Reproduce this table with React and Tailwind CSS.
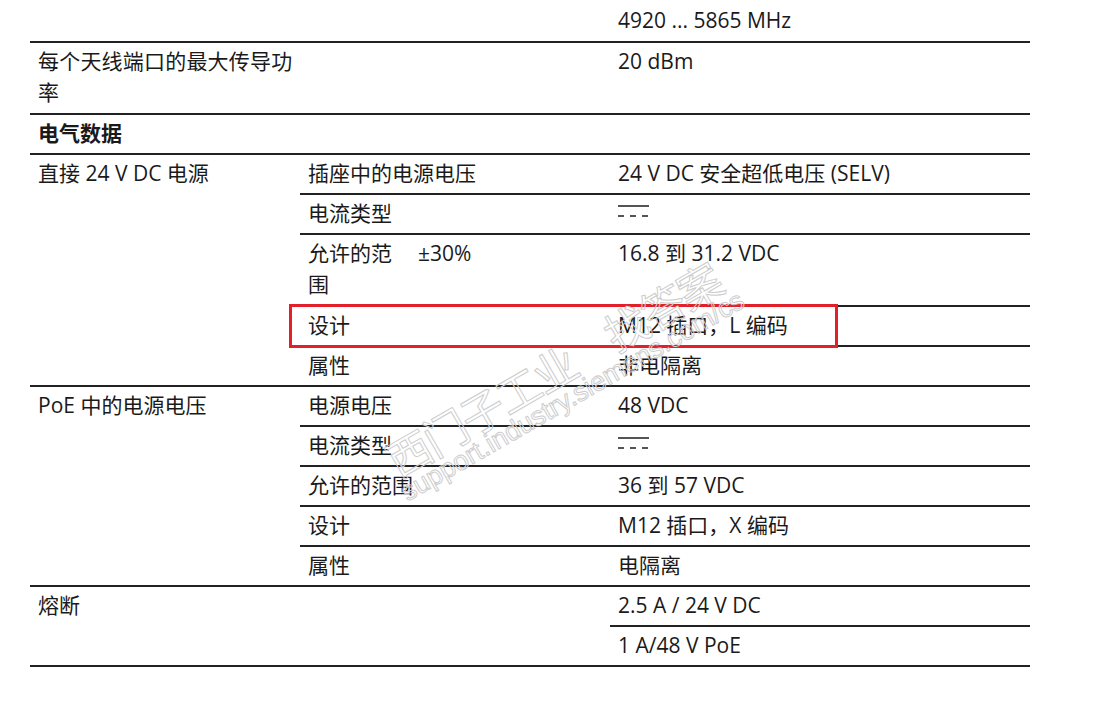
import React from 'react';

const line = 'border-[#222]';

function DcSymbol() {
  return (
    <div className="pt-[7px]">
      <div className="w-[31px] h-[2px] bg-[#555]" />
      <div className="flex gap-[6px] mt-[8px]">
        <div className="w-[6px] h-[2px] bg-[#555]" />
        <div className="w-[6px] h-[2px] bg-[#555]" />
        <div className="w-[6px] h-[2px] bg-[#555]" />
      </div>
    </div>
  );
}

function SubRow({ label, value, last, tall }) {
  const h = last ? (tall ? 'h-[70px]' : 'h-[38px]') : tall ? 'h-[72px]' : 'h-[40px]';
  return (
    <div className={`flex ${h} ${last ? '' : `border-b-2 ${line}`}`}>
      <div className="w-[310px] pl-[8px] pt-[3px]">{label}</div>
      <div className="flex-1 pl-[8px] pt-[3px]">{value}</div>
    </div>
  );
}

function Group({ title, rows }) {
  return (
    <div className={`flex border-b-2 ${line}`}>
      <div className="w-[270px] pl-[8px] pt-[3px]">{title}</div>
      <div className="flex-1 flex flex-col">
        {rows.map((r, i) => (
          <SubRow key={i} {...r} last={i === rows.length - 1} />
        ))}
      </div>
    </div>
  );
}

export default function App() {
  return (
    <div className="relative w-[1104px] h-[720px] bg-white overflow-hidden text-[#1a1a1a] text-[21px] leading-[31px] font-['Open_Sans','Noto_Sans_CJK_SC',sans-serif]">
      <div className="ml-[30px] w-[1000px]">
        <div className={`flex h-[43px] border-b-2 ${line}`}>
          <div className="w-[580px]" />
          <div className="flex-1 pl-[8px] pt-[5px]">4920 ... 5865 MHz</div>
        </div>

        <div className={`flex h-[72px] border-b-2 ${line}`}>
          <div className="w-[270px] pl-[8px] pt-[3px] tracking-[0.2px] whitespace-nowrap">
            每个天线端口的最大传导功
            <br />
            率
          </div>
          <div className="w-[310px]" />
          <div className="flex-1 pl-[8px] pt-[3px]">20 dBm</div>
        </div>

        <div className={`flex h-[40px] border-b-2 ${line}`}>
          <div className="pl-[8px] pt-[3px] font-bold">电气数据</div>
        </div>

        <Group
          title="直接 24 V DC 电源"
          rows={[
            { label: '插座中的电源电压', value: '24 V DC 安全超低电压 (SELV)' },
            { label: '电流类型', value: <DcSymbol /> },
            {
              label: (
                <div className="flex">
                  <div className="w-[100px]">允许的范围</div>
                  <div className="pl-[10px]">±30%</div>
                </div>
              ),
              value: '16.8 到 31.2 VDC',
              tall: true,
            },
            { label: '设计', value: 'M12 插口，L 编码' },
            { label: '属性', value: '非电隔离' },
          ]}
        />

        <Group
          title="PoE 中的电源电压"
          rows={[
            { label: '电源电压', value: '48 VDC' },
            { label: '电流类型', value: <DcSymbol /> },
            { label: '允许的范围', value: '36 到 57 VDC' },
            { label: '设计', value: 'M12 插口，X 编码' },
            { label: '属性', value: '电隔离' },
          ]}
        />

        <div className={`flex border-b-2 ${line}`}>
          <div className="w-[580px] pl-[8px] pt-[3px]">熔断</div>
          <div className="flex-1 flex flex-col">
            <div className={`h-[40px] pl-[8px] pt-[3px] border-b-2 ${line}`}>2.5 A / 24 V DC</div>
            <div className="h-[38px] pl-[8px] pt-[3px]">1 A/48 V PoE</div>
          </div>
        </div>
      </div>

      {/* highlight box */}
      <div className="absolute left-[289px] top-[304px] w-[549px] h-[44px] border-[3px] border-[#e3202a]" />

      {/* watermark */}
      <div className="pointer-events-none absolute left-[380px] top-[446px] origin-top-left rotate-[-30deg] text-transparent [-webkit-text-stroke:1px_#cdcdcd] font-['Liberation_Sans','Noto_Sans_CJK_SC',sans-serif]">
        <div className="text-[44px] leading-[46px] whitespace-nowrap tracking-[-2px]">西门子工业&nbsp;&nbsp;&nbsp;&nbsp;找答案</div>
        <div className="text-[27px] leading-[26px] whitespace-nowrap -mt-[6px] -ml-[4px]">support.industry.siemens.com/cs</div>
      </div>
    </div>
  );
}
